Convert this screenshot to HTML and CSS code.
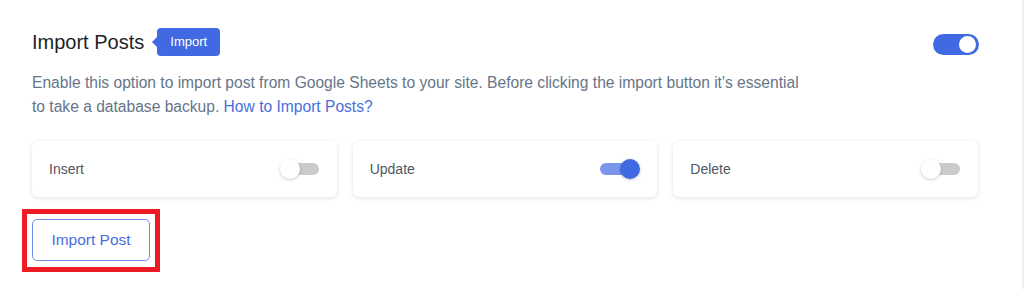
FILE: index.html
```html
<!DOCTYPE html>
<html lang="en">
<head>
<meta charset="utf-8">
<title>Import Posts</title>
<link rel="stylesheet" href="styles.css">
</head>
<body>
<div class="panel">
  <div class="header">
    <div class="title-group">
      <h2 class="title">Import Posts</h2>
      <span class="badge">Import</span>
    </div>
    <span class="toggle toggle-main is-on"><span class="toggle-knob"></span></span>
  </div>
  <p class="desc">Enable this option to import post from Google Sheets to your site. Before clicking the import button it's essential to take a database backup. <a class="desc-link" href="#">How to Import Posts?</a></p>
  <div class="options">
    <div class="option-card">
      <span class="option-label">Insert</span>
      <span class="switch"><span class="switch-track"></span><span class="switch-knob"></span></span>
    </div>
    <div class="option-card">
      <span class="option-label">Update</span>
      <span class="switch is-on"><span class="switch-track"></span><span class="switch-knob"></span></span>
    </div>
    <div class="option-card">
      <span class="option-label">Delete</span>
      <span class="switch"><span class="switch-track"></span><span class="switch-knob"></span></span>
    </div>
  </div>
  <div class="actions">
    <button class="btn-outline highlighted" type="button">Import Post</button>
  </div>
</div>
</body>
</html>
```
FILE: styles.css
```css
* { box-sizing: border-box; }

html, body {
  margin: 0;
  padding: 0;
}

body {
  background: #f0f0f1;
  font-family: "Liberation Sans", Arial, sans-serif;
  height: 289px;
  overflow: hidden;
}

.panel {
  width: 1022px;
  height: 289px;
  background: #ffffff;
  padding: 28px 44px 0 32px;
}

.header {
  display: flex;
  justify-content: space-between;
  align-items: flex-start;
}

.title-group {
  display: flex;
  align-items: center;
}

.title {
  margin: 0;
  font-size: 20px;
  line-height: 28px;
  font-weight: 400;
  color: #1d2327;
}

.badge {
  position: relative;
  margin-left: 13px;
  height: 28px;
  padding: 0 13px;
  line-height: 28px;
  font-size: 13px;
  color: #ffffff;
  background: #4169e1;
  border-radius: 4px;
}

.badge::before {
  content: "";
  position: absolute;
  left: -5px;
  top: 9px;
  border-top: 5px solid transparent;
  border-bottom: 5px solid transparent;
  border-right: 5px solid #4169e1;
}

.toggle {
  position: relative;
  display: block;
  width: 46px;
  height: 21px;
  margin-top: 6px;
  margin-right: -1px;
  border-radius: 11px;
  background: #4169e1;
}

.toggle-knob {
  position: absolute;
  top: 2px;
  right: 3px;
  width: 17px;
  height: 17px;
  border-radius: 50%;
  background: #ffffff;
}

.desc {
  margin: 15px 0 0;
  max-width: 778px;
  font-size: 15.6px;
  line-height: 24px;
  color: #667589;
}

.desc-link {
  color: #4a6ee0;
  text-decoration: none;
}

.options {
  display: grid;
  grid-template-columns: repeat(3, 1fr);
  gap: 16px;
  margin-top: 22px;
}

.option-card {
  display: flex;
  align-items: center;
  justify-content: space-between;
  height: 56px;
  padding: 0 17px;
  background: #ffffff;
  border-radius: 6px;
  box-shadow: 0 1px 4px rgba(30, 40, 60, 0.14);
}

.option-label {
  font-size: 14px;
  color: #50575e;
}

.switch {
  position: relative;
  display: block;
  width: 40px;
  height: 20px;
}

.switch-track {
  position: absolute;
  left: 3px;
  right: 1px;
  top: 4px;
  height: 12px;
  border-radius: 6px;
  background: #cbcbcb;
}

.switch-knob {
  position: absolute;
  left: 0;
  top: 0;
  width: 20px;
  height: 20px;
  border-radius: 50%;
  background: #ffffff;
  box-shadow: 0 1px 3px rgba(0, 0, 0, 0.22);
}

.switch.is-on .switch-track {
  left: 0;
  right: 4px;
  background: #7a95ec;
}

.switch.is-on .switch-knob {
  left: 20px;
  background: #4169e1;
}

.actions {
  margin-top: 22px;
}

.btn-outline {
  position: relative;
  height: 42px;
  width: 118px;
  padding: 0;
  font-family: "Liberation Sans", Arial, sans-serif;
  font-size: 15.5px;
  color: #4a6ee0;
  background: #ffffff;
  border: 1px solid #6f8de8;
  border-radius: 5px;
}

.highlighted::after {
  content: "";
  position: absolute;
  left: -11px;
  top: -11px;
  right: -11px;
  bottom: -12px;
  border: 5px solid #ed1c24;
  pointer-events: none;
}
```
